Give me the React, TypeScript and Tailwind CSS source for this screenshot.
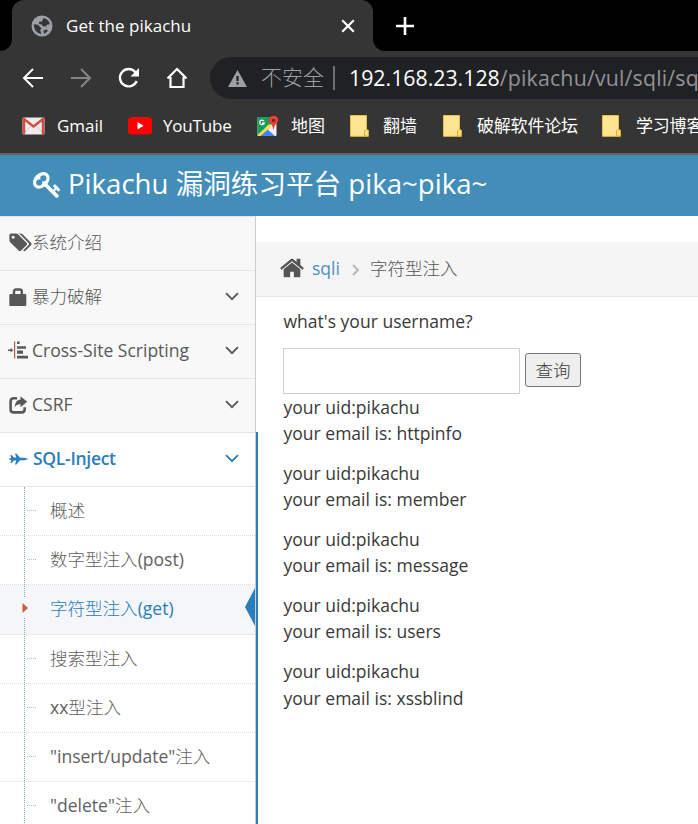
import type { ReactNode } from "react";

const sans = "font-['Open_Sans','Noto_Sans_CJK_SC',sans-serif]";

type P = { className?: string };

const Angle = ({ className }: P) => (
  <svg className={className} width="14" height="9" viewBox="0 0 14 9" fill="none" stroke="currentColor" strokeWidth="1.9">
    <path d="M1 1.2 7 7.2 13 1.2" />
  </svg>
);

const Key = () => (
  <svg width="29" height="29" viewBox="0 0 1792 1792" fill="currentColor" className="shrink-0">
    <path d="M832 512q0-80-56-136t-136-56-136 56-56 136q0 42 19 83-41-19-83-19-80 0-136 56t-56 136 56 136 136 56 136-56 56-136q0-42-19-83 41 19 83 19 80 0 136-56t56-136zm851 704q0 17-49 66t-66 49q-9 0-28.5-16t-36.5-33-38.5-40-24.5-26l-96 96 220 220q28 28 28 68 0 42-39 81t-81 39q-40 0-68-28l-671-671q-176 131-365 131-163 0-265.5-102.5t-102.5-265.5q0-160 95-313t248-248 313-95q163 0 265.5 102.5t102.5 265.5q0 189-131 365l355 355 96-96q-3-3-26-24.5t-40-38.5-33-36.5-16-28.5q0-17 49-66t66-49q13 0 23 10 6 6 46 44.5t82 79.5 86.5 86 73 78 28.5 41z" />
  </svg>
);

const Home = () => (
  <svg width="26" height="26" viewBox="0 0 1792 1792" fill="currentColor">
    <path d="M1472 992v480q0 26-19 45t-45 19h-384v-384h-256v384h-384q-26 0-45-19t-19-45v-480q0-1 .5-3t.5-3l575-474 575 474q1 2 1 6zm223-69l-62 74q-8 9-21 11h-3q-13 0-21-7l-692-577-692 577q-12 8-24 7-13-2-21-11l-62-74q-8-10-7-23.5t11-21.5l719-599q32-26 76-26t76 26l244 204v-195q0-14 9-23t23-9h192q14 0 23 9t9 23v408l219 182q10 8 11 21.5t-7 23.5z" />
  </svg>
);

const Tags = () => (
  <svg width="23" height="21" viewBox="0 0 1899 1792" fill="currentColor" className="shrink-0">
    <path d="M448 448q0-53-37.5-90.5t-90.5-37.5-90.5 37.5-37.5 90.5 37.5 90.5 90.5 37.5 90.5-37.5 37.5-90.5zm1067 576q0 53-37 90l-491 492q-39 37-91 37-53 0-90-37l-715-716q-38-37-64.5-101t-26.5-117v-416q0-52 38-90t90-38h416q53 0 117 26.5t102 64.5l715 714q37 39 37 91zm384 0q0 53-37 90l-491 492q-39 37-91 37-36 0-59-14t-53-45l470-470q37-37 37-90 0-52-37-91l-715-714q-38-38-102-64.5t-117-26.5h224q53 0 117 26.5t102 64.5l715 714q37 39 37 91z" />
  </svg>
);

const Lock = () => (
  <svg width="20" height="20" viewBox="0 0 20 20">
    <path d="M5 8V4.5Q5 2.5 7 2.5h3.8q2 0 2 2V8" fill="none" stroke="currentColor" strokeWidth="2.4" />
    <rect x="0.3" y="7" width="17" height="12" rx="1" fill="currentColor" />
  </svg>
);

const Align = () => (
  <svg width="20" height="20" viewBox="0 0 20 20" fill="currentColor" className="-ml-px">
    <path d="M0 8.4h2.6V6.8L5.3 9.2 2.6 11.6V10H0z" />
    <path d="M6 .5h1.2v17H6z" fill="#a85c50" />
    <path d="M9 .5h2.6v2.6H9zM9 5.2h9v2.5H9zM9 9.6h6v3.2H9zM9 14.8h11v2.6H9z" />
  </svg>
);

const Share = () => (
  <svg width="20" height="20" viewBox="0 0 20 20">
    <path d="M8 3.2H4.8Q1.6 3.2 1.6 6.4v8Q1.6 17.4 4.8 17.4h7.8q3.1 0 3.1-3.1v-2" fill="none" stroke="currentColor" strokeWidth="2.6" />
    <path d="M11.5 1.2 18.2 6.7 11.5 12.2V9.2Q7.6 9 5.7 12.4 5.8 5.2 11.5 4.5z" fill="currentColor" />
  </svg>
);

const Plane = () => (
  <svg width="20" height="18" viewBox="0 0 20 18" fill="currentColor">
    <path d="M19.5 9 15.5 10.2H11L7.4 14.6H6L7.3 10.6H4.8L2.7 13H1.4L2.2 10.1.2 9.5V8.5L2.2 7.9 1.4 5H2.7L4.8 7.4H7.3L6 3.4H7.4L11 7.8h4.5z" />
  </svg>
);

const Globe = () => (
  <svg width="22" height="22" viewBox="0 0 22 22">
    <circle cx="11" cy="11" r="10.5" fill="#9aa0a6" />
    <path d="M2.8 9.3 7 9.8l3.5 3.6-1.4 1.5 1.4 4.2Q3 18 2.8 9.3M12.5 3q4.8.8 6.5 6.2l-2.8.2-1.4 2.1-3-.2-1-1.7-2.8-.5.2-2.3 2.8-.3z" fill="#353535" />
    <path d="m12.3 15.6 3.5-1.1 1.2 1.3-3.6 3.1z" fill="#353535" />
  </svg>
);

const Gmail = () => (
  <svg width="23" height="18" viewBox="0 0 23 18">
    <rect x=".5" y=".5" width="22" height="17" rx="1.5" fill="#ececec" />
    <path d="m1 17 8-8m13 8-8-8" stroke="#d0d0d0" fill="none" />
    <path d="M2 17.5V2L11.5 9.5 21 2v15.5" fill="none" stroke="#d54b3f" strokeWidth="2.4" />
  </svg>
);

const YouTube = () => (
  <svg width="24" height="18" viewBox="0 0 24 18">
    <rect width="24" height="17.5" rx="3.5" fill="#f00" />
    <path d="m9.5 5 6.2 3.7-6.2 3.8z" fill="#fff" />
  </svg>
);

const Maps = () => (
  <svg width="22" height="22" viewBox="0 0 22 22">
    <rect x=".5" y="2" width="19" height="19" rx="1" fill="#f1f1f1" />
    <path d="M.5 3Q.5 2 1.5 2H13l1 7L.5 20z" fill="#1a9c5a" />
    <path d="M.5 20.5 12 9l2.5 2.5L4.5 21H1z" fill="#ffdc48" />
    <path d="m3.5 21 7.2-6.5 7.3 6.5z" fill="#4285f4" />
    <path d="M7 6.2a2.3 2.3 0 1 0 .2 2H5" fill="none" stroke="#fff" strokeWidth="1.2" />
    <path d="M16.5 15Q16.3 11 13.3 8.2C9.7 4.5 12.5.7 16.5.7s6.8 3.8 3.2 7.5Q16.7 11 16.5 15" fill="#ea4335" />
    <circle cx="16.5" cy="5.5" r="1.7" fill="#7b231c" />
  </svg>
);

const Folder = () => (
  <svg width="19" height="22" viewBox="0 0 19 22">
    <path d="M.5.5h16v14.2l1.8.8v5.8H.5z" fill="#ffe591" stroke="#e8bf48" />
    <path d="M14.5 21v-5l1-1.2h2.2l.8 1V21z" fill="#ffdf7d" stroke="#dcb23b" />
  </svg>
);

const Thin = ({ children }: { children: ReactNode }) => <span className="font-light">{children}</span>;

function Row({ icon, label, top, active }: { icon: ReactNode; label: ReactNode; top?: boolean; active?: boolean }) {
  return (
    <div className={`flex items-center border-b border-[#e5e5e5] pb-[2px] pl-[9px] pr-4 ${active ? "h-[55px] border-t bg-white font-semibold tracking-[-0.3px] text-[#2b7dbc]" : "h-[54px] bg-[#f8f8f8] text-[#585858]"}`}>
      <span className={`flex shrink-0 items-center ${active ? "w-6" : "w-[23px]"}`}>{icon}</span>
      <span className="flex-1 whitespace-nowrap">{label}</span>
      {!top && <Angle />}
    </div>
  );
}

const subs: [string, string, string][] = [
  ["", "概述", ""],
  ["", "数字型注入", "(post)"],
  ["", "字符型注入", "(get)"],
  ["", "搜索型注入", ""],
  ["xx", "型注入", ""],
  ['"insert/update"', "注入", ""],
  ['"delete"', "注入", ""],
];

const emails = ["httpinfo", "member", "message", "users", "xssblind"];

export default function App() {
  return (
    <div className={`h-[824px] w-[698px] overflow-hidden bg-white text-[17.55px] ${sans}`}>
      <div className="flex h-[51px] bg-black">
        <div className="flex w-3 bg-[#353535]"><div className="w-full rounded-br-xl bg-black" /></div>
        <div className="flex w-[361px] items-center rounded-t-xl bg-[#353535] pl-[19px] pr-[18px] text-white">
          <Globe />
          <span className="ml-[13px] flex-1 text-[17px] tracking-[0.02px]">Get the pikachu</span>
          <svg width="14" height="14" viewBox="0 0 14 14" stroke="currentColor" strokeWidth="2.2"><path d="m1.2 1.2 11.6 11.6M12.8 1.2 1.2 12.8" /></svg>
        </div>
        <div className="flex flex-1 bg-[#353535]">
          <div className="flex w-full items-center rounded-bl-xl bg-black pl-[23px] text-white">
            <svg width="18" height="18" viewBox="0 0 18 18" stroke="currentColor" strokeWidth="2.6"><path d="M9 0v18M0 9h18" /></svg>
          </div>
        </div>
      </div>

      <div className="flex h-[54px] items-center bg-[#353535] pl-[22px] text-white">
        <svg width="22" height="22" viewBox="0 0 22 22" fill="none" stroke="currentColor" strokeWidth="2"><path d="M21 11H2M11 2 2 11l9 9" /></svg>
        <svg className="ml-[26px] text-[#858585]" width="22" height="22" viewBox="0 0 22 22" fill="none" stroke="currentColor" strokeWidth="2"><path d="M1 11h19M11 2l9 9-9 9" /></svg>
        <svg className="ml-[26px]" width="22" height="22" viewBox="0 0 22 22" fill="none" stroke="currentColor" strokeWidth="2.3"><path d="M18.7 14A8.7 8.7 0 1 1 17.4 5.2L19 7" /><path d="M21 1v8.5h-8.5z" fill="currentColor" stroke="none" /></svg>
        <svg className="ml-[26px]" width="22" height="22" viewBox="0 0 22 22" fill="none" stroke="currentColor" strokeWidth="2.2"><path d="M1.5 11.5 11 2l9.5 9.5M4.5 10v10h13V10" /></svg>
        <div className="ml-[22px] flex h-[42px] flex-1 items-center overflow-hidden whitespace-nowrap rounded-l-full bg-[#202124] pl-[18px]">
          <svg width="19" height="17" viewBox="0 0 19 17" className="shrink-0"><path d="M9.5 0 19 17H0z" fill="#9aa0a6" /><path d="M8.4 6h2.2v5H8.4zM8.4 12.3h2.2v2.2H8.4z" fill="#202124" /></svg>
          <span className="ml-3.5 text-[21px] font-light text-[#9aa0a6]">不安全</span>
          <span className="ml-[9px] h-6 w-0.5 shrink-0 bg-[#6e7074]" />
          <span className="ml-[14px] text-[21.3px]">192.168.23.128<span className="tracking-[0.2px] text-[#929395]">/pikachu/vul/sqli/sq</span></span>
        </div>
      </div>

      <div className="flex h-12 items-center overflow-hidden whitespace-nowrap bg-[#353535] pb-1.5 pl-[22px] text-[17px] text-white">
        <span className="flex w-[106px] shrink-0 items-center gap-3"><Gmail />Gmail</span>
        <span className="flex w-[129px] shrink-0 items-center gap-[11px] tracking-[-0.2px]"><YouTube />YouTube</span>
        <span className="flex w-[93px] shrink-0 items-center gap-3"><Maps />地图</span>
        <span className="flex w-[93px] shrink-0 items-center gap-[14px]"><Folder />翻墙</span>
        <span className="flex w-[159px] shrink-0 items-center gap-[15px] tracking-[-0.2px]"><Folder />破解软件论坛</span>
        <span className="flex shrink-0 items-center gap-[15px] tracking-[-0.2px]"><Folder />学习博客</span>
      </div>
      <div className="h-0.5 bg-[#636363]" />

      <header className="flex h-[61px] items-center gap-1.5 bg-[#438eb9] pb-[3px] pl-[33px] text-[27.6px] text-white">
        <Key />
        <span className="whitespace-nowrap">Pikachu 漏洞练习平台 pika~pika~</span>
      </header>

      <div className="flex h-[608px]">
        <aside className="flex w-[258px] shrink-0 flex-col">
          <div className="flex">
            <div className="w-[256px] border-r border-t border-r-[#ccc] border-t-[#e5e5e5]">
              <Row icon={<Tags />} label={<Thin>系统介绍</Thin>} top />
              <Row icon={<Lock />} label={<Thin>暴力破解</Thin>} />
              <Row icon={<Align />} label="Cross-Site Scripting" />
              <Row icon={<Share />} label="CSRF" />
            </div>
          </div>
          <div className="-mt-px flex-1 border-r-2 border-[#2b7dbc]">
            <div className="h-full border-r border-[#ccc]">
              <Row icon={<Plane />} label="SQL-Inject" active />
              <div className="relative">
                {subs.map(([pre, zh, post], i) => (
                  <div key={i} className={`relative flex h-[49.2px] items-center border-b border-dotted border-[#dcdcdc] pb-[2px] pl-[50px] ${i === 2 ? "bg-[#f4f6fa] text-[#2b7dbc]" : "text-[#616161]"}`}>
                    {i !== 2 && <span className="absolute left-[27px] top-[23px] w-[9px] border-t border-dotted border-[#9dbdd6]" />}
                    <span className="whitespace-nowrap">{pre}<Thin>{zh}</Thin>{post}</span>
                    {i === 2 && (
                      <svg className="absolute right-0 top-[3px]" width="10" height="38" viewBox="0 0 10 38"><path d="M10 0v38L0 19z" fill="#2b7dbc" /></svg>
                    )}
                  </div>
                ))}
                <span className="absolute left-6 top-0 h-full border-l border-dotted border-[#7fadd0]" />
                <span className="absolute left-[22px] top-[111px] flex h-[20px] items-center bg-[#f4f6fa]">
                  <svg width="6" height="10" viewBox="0 0 6 10"><path d="M.5 0 6 5 .5 10z" fill="#c86139" /></svg>
                </span>
              </div>
            </div>
          </div>
        </aside>

        <main className="flex-1 pt-[26px] text-[#393939]">
          <div className="-ml-0.5 flex h-[55px] items-center border-b border-[#e5e5e5] bg-[#f5f5f5] pb-[2px] pl-[23px] text-[#555]">
            <Home />
            <span className="ml-[7px] text-[#4c8fbd]">sqli</span>
            <svg className="ml-[12px] mt-[3px]" width="7" height="12" viewBox="0 0 7 12" fill="none" stroke="#b2b6bf" strokeWidth="1.9"><path d="m1 1 5 5-5 5" /></svg>
            <span className="ml-[11px]"><Thin>字符型注入</Thin></span>
          </div>
          <div className="pl-[25.5px] pt-[11px] leading-[26.2px]">
            <p>what's your username?</p>
            <div className="-ml-[0.5px] mt-[13.8px] flex h-[46px] items-center gap-[5px]">
              <input className="h-[46px] w-[237px] border border-[#d0d0d0] bg-white" />
              <button className="-mt-0.5 h-[34px] w-14 rounded-[3px] border border-[#767676] bg-[#efefef] leading-[31px]"><Thin>查询</Thin></button>
            </div>
            {emails.map((e) => (
              <p key={e} className="mb-[13.7px]">your uid:pikachu<br />your email is: {e}</p>
            ))}
          </div>
        </main>
      </div>
    </div>
  );
}
